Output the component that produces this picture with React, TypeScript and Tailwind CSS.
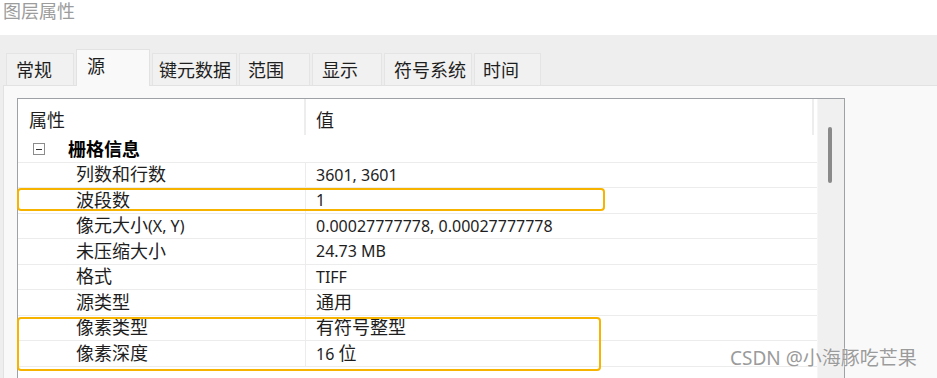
import React from 'react'

const tabs = [
  { name: '常规', w: 'w-[68px]', pad: 'pl-[9px]' },
  { name: '源', w: 'w-[74px]', pad: 'pl-[10px]', active: true },
  { name: '键元数据', w: 'w-[85px]', pad: 'pl-[6px]' },
  { name: '范围', w: 'w-[71px]', pad: 'pl-[8px]' },
  { name: '显示', w: 'w-[70px]', pad: 'pl-[9px]' },
  { name: '符号系统', w: 'w-[88px]', pad: 'pl-[9px]' },
  { name: '时间', w: 'w-[67px]', pad: 'pl-[8px]' },
]

const rows = [
  ['列数和行数', '3601, 3601'],
  ['波段数', '1'],
  ['像元大小(X, Y)', '0.00027777778, 0.00027777778'],
  ['未压缩大小', '24.73 MB'],
  ['格式', 'TIFF'],
  ['源类型', '通用'],
  ['像素类型', '有符号整型'],
  ['像素深度', '16 位'],
]

function Mixed({ text }: { text: string }) {
  const parts = text.split(/([\u4e00-\u9fff]+)/).filter(Boolean)
  return (
    <span className="whitespace-pre">
      {parts.map((p, i) =>
        /[\u4e00-\u9fff]/.test(p)
          ? <span key={i} className="text-[18px]">{p}</span>
          : <span key={i}>{p}</span>
      )}
    </span>
  )
}

export default function App() {
  return (
    <div className="relative w-[937px] h-[378px] overflow-hidden bg-white text-[#1e1e1e] flex flex-col" style={{ fontFamily: '"Noto Sans", "Noto Sans CJK SC", sans-serif' }}>
      <div className="h-[35px] shrink-0 pl-[3px] text-[18px] leading-[23px] text-[#9c9c9c]">图层属性</div>

      <div className="flex-1 bg-[#eeeeee] flex flex-col">
        <div className="flex items-end gap-[2px] pl-[6px] pt-[14px]">
          {tabs.map(t => t.active ? (
            <div key={t.name} className={`${t.w} ${t.pad} h-[37px] -mb-px relative z-10 bg-[#f9f9f9] border border-b-0 border-[#e2e2e2] flex items-start pt-[3px] text-[18px] leading-[26px]`}>
              {t.name}
            </div>
          ) : (
            <div key={t.name} className={`${t.w} ${t.pad} h-[32px] bg-[#f1f1f1] border border-b-0 border-[#e4e4e4] flex items-center pt-[1px] text-[18px] leading-[26px]`}>
              {t.name}
            </div>
          ))}
        </div>

        <div className="flex-1 ml-[3px] bg-[#f9f9f9] border-l border-t border-[#e2e2e2] pl-[13px] pt-[12px]">
          <div className="w-[828px] h-[300px] border border-[#9ea2a7] bg-white flex">
            <div className="w-[799px] flex flex-col">
              <div className="h-[38px] flex shrink-0">
                <div className="w-[288px] pl-[11px] pt-[9px] text-[18px] leading-[24px] border-r-2 border-[#ededed] mb-[2px]">属性</div>
                <div className="flex-1 pl-[10px] pt-[9px] text-[18px] leading-[24px] border-r-2 border-[#ededed] mr-[3px] mb-[2px]">值</div>
              </div>

              <div className="h-[25.5px] flex items-center border-b border-[#ececec] shrink-0">
                <div className="w-[288px] flex items-center">
                  <div className="ml-[15px] w-[12px] h-[12px] border border-[#8c8c8c] flex items-center justify-center">
                    <div className="w-[6px] h-px bg-[#333]" />
                  </div>
                  <span className="ml-[23px] text-[18px] font-bold leading-[24px] text-black">栅格信息</span>
                </div>
              </div>

              {rows.map(([k, v]) => (
                <div key={k} className="h-[25.5px] flex border-b border-[#ececec] shrink-0 text-[16px] leading-[24px]">
                  <div className="w-[288px] pl-[58px] flex items-center border-r border-[#ececec]"><Mixed text={k} /></div>
                  <div className="flex-1 pl-[10px] flex items-center"><Mixed text={v} /></div>
                </div>
              ))}
            </div>

            <div className="flex-1 bg-[#f0f0f0] border-l border-[#f6f6f6] pt-[28px] pl-[10px]">
              <div className="w-[4px] h-[56px] rounded-full bg-[#8a8a8a]" />
            </div>
          </div>
        </div>
      </div>

      <div className="absolute left-[17px] top-[188px] w-[588px] h-[23px] border-2 border-[#f6b400] rounded-[4px]" />
      <div className="absolute left-[17px] top-[317px] w-[584px] h-[54px] border-2 border-[#f6b400] rounded-[4px]" />

      <div className="absolute left-[730px] top-[345px] text-[19px] leading-[26px] text-[#9b9b9b] whitespace-nowrap" style={{ textShadow: '0 0 2px #fff' }}>
        CSDN @小海豚吃芒果
      </div>
    </div>
  )
}
